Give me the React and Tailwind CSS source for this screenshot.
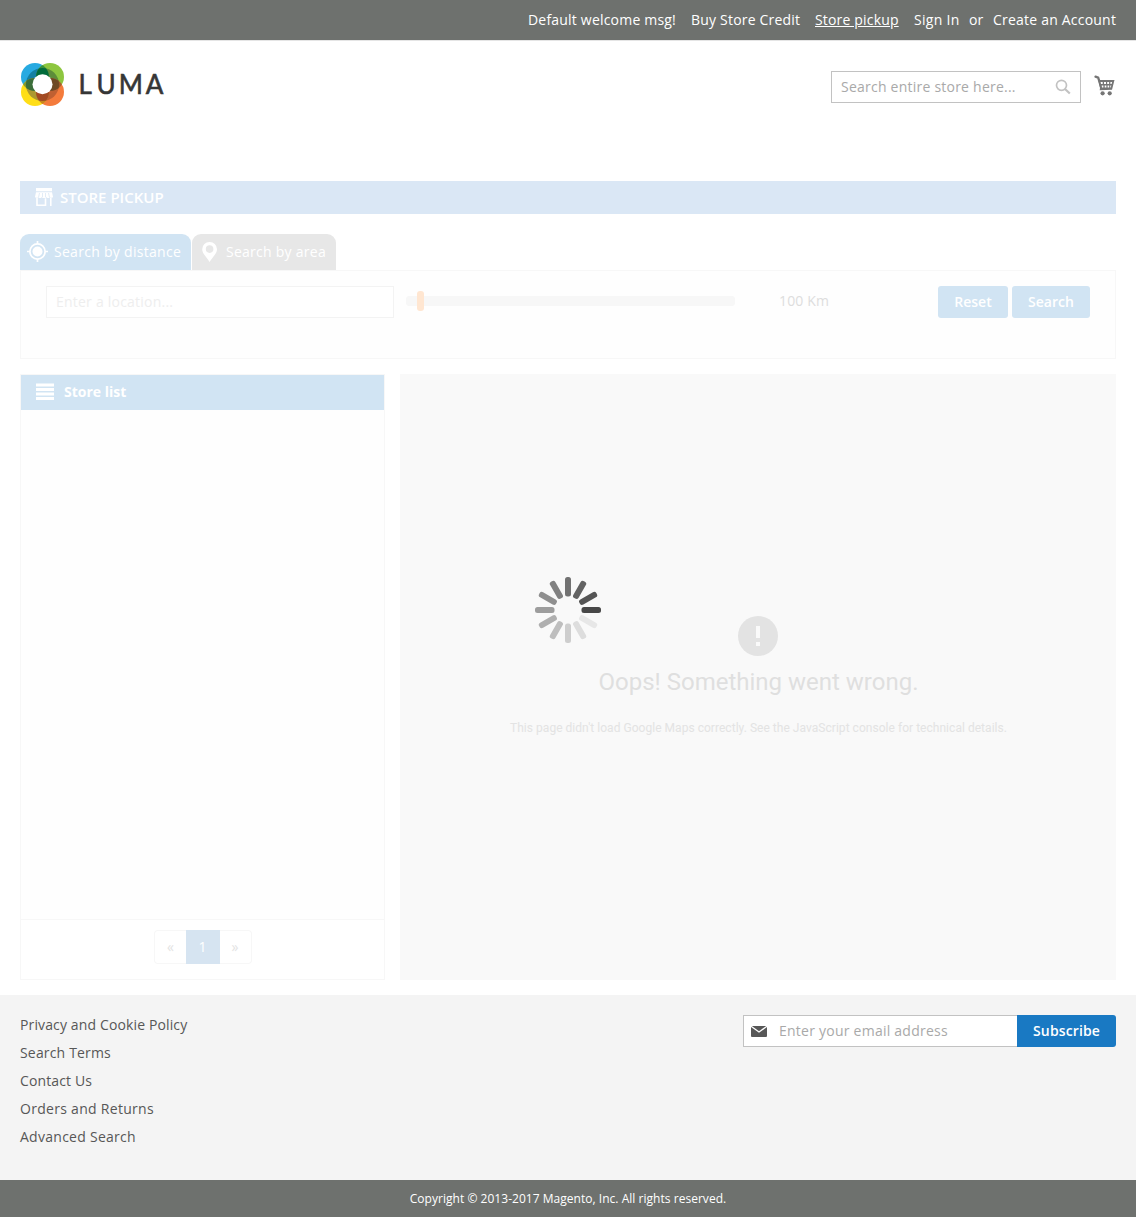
import React from 'react';

const overlaps = [
  { id: 'top', a: [35, 77], b: [50, 77], color: '#006b3a' },
  { id: 'left', a: [35, 77], b: [35, 92], color: '#3b6e3a' },
  { id: 'right', a: [50, 77], b: [50, 92], color: '#6f4a25' },
  { id: 'bottom', a: [35, 92], b: [50, 92], color: '#a34a22' },
];

function Logo() {
  return (
    <div className="flex h-[45px] w-[156px] items-start">
      <svg className="h-[45px] w-[45px] shrink-0" viewBox="20 62 45 45">
        <defs>
          {overlaps.map((o) => (
            <clipPath key={o.id} id={`lens-${o.id}`}>
              <circle cx={o.a[0]} cy={o.a[1]} r="14" />
            </clipPath>
          ))}
          <clipPath id="ring"><circle cx="42.5" cy="84.5" r="16.6" /></clipPath>
        </defs>
        <circle cx="35" cy="77" r="14" fill="#27aae1" />
        <circle cx="50" cy="77" r="14" fill="#8dc63f" />
        <circle cx="50" cy="92" r="14" fill="#f47b3c" />
        <circle cx="35" cy="92" r="14" fill="#ffde17" />
        {overlaps.map((o) => (
          <circle key={o.id} cx={o.b[0]} cy={o.b[1]} r="14" fill={o.color} opacity=".6" clipPath={`url(#lens-${o.id})`} />
        ))}
        <g clipPath="url(#ring)">
          <circle cx="35" cy="77" r="14" fill="#1480a3" />
          <circle cx="50" cy="77" r="14" fill="#5d8d3a" />
          <circle cx="50" cy="92" r="14" fill="#bf6032" />
          <circle cx="35" cy="92" r="14" fill="#ad9830" />
          {overlaps.map((o) => (
            <circle key={o.id} cx={o.b[0]} cy={o.b[1]} r="14" fill={o.color} clipPath={`url(#lens-${o.id})`} />
          ))}
        </g>
        <circle cx="42.5" cy="84.3" r="10" fill="#fff" />
      </svg>
      <svg className="mt-[2px] ml-[10px] h-[42px] w-[100px] shrink-0 overflow-visible" viewBox="-4 -6 100 42">
        <text x="-0.4 17.6 39.8 66.800" y="24.300" stroke="#363636" strokeWidth=".6" className="fill-[#363636] font-['Lato',sans-serif] text-[26px] font-normal">LUMA</text>
      </svg>
    </div>
  );
}

function CartIcon() {
  return (
    <svg className="h-[21px] w-[21px]" viewBox="0 0 21 21" fill="#757575">
      <path d="M1.500 1.700 4.200 2.700 7.500 13.500" fill="none" stroke="#757575" strokeWidth="2.300" strokeLinecap="round" />
      <path d="M4.300 5H20.500l-2.500 9.700-12.300.6.300-2.300z" />
      <g fill="#fff">
        <path d="M6.600 7h2.100v1.900H7zM10 7h2v1.900h-2zM13.200 7h1.900v1.900h-1.900zM16.400 7h1.700l-.5 1.900h-1.200zM7.700 10.500h1.700v1.900H8zM10.700 10.500h1.700v1.900h-1.700zM13.600 10.500h1.600v1.900h-1.600zM16.300 10.500h1l-.5 1.900h-.5z" />
      </g>
      <circle cx="8.600" cy="18.300" r="2.100" />
      <circle cx="15.700" cy="18.300" r="2.100" />
    </svg>
  );
}

function StoreIcon() {
  return (
    <svg className="h-[18px] w-[18px]" viewBox="0 0 18 18">
      <path d="M1 0h16v3.200H1zM1 4.200h16l1 4.500c0 1.500-2.800 1.500-3.200.2-.6 1.400-2.900 1.400-3.400 0-.6 1.400-4 1.400-4.600 0-.5 1.400-2.900 1.400-3.500 0C2.900 10.200 0 10.200 0 8.700z" fill="#fff" />
      <path d="M4.500 5 3.600 9M7.500 5v4M10.500 5v4M13.500 5l.9 4" stroke="#dae7f5" strokeWidth=".8" />
      <path d="M2 10v7.200h8.500V10.500M15.800 10v8" fill="none" stroke="#fff" strokeWidth="1.600" />
      <path d="M10 10.500h1v7h-1z" fill="#fff" />
    </svg>
  );
}

const spokes = ['#484848', '#e7e7e7', '#dddddd', '#cecece', '#bebebe', '#afafaf', '#9d9d9d', '#8f8f8f', '#818181', '#727272', '#636363', '#555555'];

function Spinner() {
  return (
    <svg className="absolute top-[576px] left-[534px] h-[68px] w-[68px]" viewBox="-34 -34 68 68">
      {spokes.map((c, i) => (
        <rect key={c} x="13.500" y="-3" width="19.500" height="6" rx="2.500" fill={c} transform={`rotate(${i * 30})`} />
      ))}
    </svg>
  );
}

export default function App() {
  return (
    <div className="relative flex h-[1217px] w-[1136px] flex-col overflow-hidden bg-white font-['Open_Sans',sans-serif] text-sm leading-5 text-[#575757]">
      <div className="flex h-[40px] shrink-0 items-center justify-end bg-[#6e716e] px-5 text-white">
        <span className="w-[148px] tracking-[.2px] whitespace-nowrap">Default welcome msg!</span>
        <a className="ml-[15px] w-[109px] tracking-[.2px] whitespace-nowrap">Buy Store Credit</a>
        <a className="ml-[15px] w-[84px] tracking-[.17px] whitespace-nowrap underline">Store pickup</a>
        <a className="ml-[15px] w-[46px] tracking-[.3px] whitespace-nowrap">Sign In</a>
        <span className="ml-[9px] w-[14px]">or</span>
        <a className="ml-[10px] w-[123px] tracking-[.21px] whitespace-nowrap">Create an Account</a>
      </div>

      <header className="flex h-[141px] shrink-0 items-start justify-between border-t border-[#e5e5e5] px-5">
        <div className="mt-[21px]"><Logo /></div>
        <div className="mt-[30px] flex">
          <div className="flex h-[32px] w-[250px] items-center justify-between border border-[#c2c2c2] pr-[9px] pl-[9px] text-[#a9a9a9]">
            <span className="tracking-[.23px]">Search entire store here...</span>
            <svg className="h-4 w-4" viewBox="0 0 16 16" fill="none" stroke="#c2c2c2" strokeWidth="1.700">
              <circle cx="6.500" cy="6.300" r="5" />
              <path d="m10 10 4.800 4.500" strokeWidth="2.200" />
            </svg>
          </div>
          <div className="mt-[4px] ml-[13px] h-[21px] w-[22px]"><CartIcon /></div>
        </div>
      </header>

      <main className="flex h-[814px] shrink-0 flex-col px-5">
        <h1 className="flex h-[33px] shrink-0 items-center bg-[#dae7f5] pb-px pl-[15px] text-[15px] font-semibold text-white">
          <StoreIcon />
          <span className="ml-[7px]">STORE PICKUP</span>
        </h1>

        <div className="mt-5 flex h-[36px] shrink-0 gap-px text-white">
          <div className="flex w-[171px] items-center rounded-t-[9px] bg-[#d1e4f3] pl-[7px]">
            <svg className="h-[22px] w-[22px]" viewBox="0.500 0.500 22 22" fill="none" stroke="#fff">
              <circle cx="11" cy="11" r="7.600" strokeWidth="1.700" />
              <circle cx="11" cy="11" r="5" fill="#fff" stroke="none" />
              <path d="M11 .5v3M11 18.500v3M.5 11h3M18.500 11h3" strokeWidth="1.700" />
            </svg>
            <span className="ml-[5px] tracking-[.29px]">Search by distance</span>
          </div>
          <div className="flex w-[144px] items-center rounded-t-[9px] bg-[#e7e7e7] pl-[10px]">
            <svg className="h-[20px] w-[16px]" viewBox="0 0 16 20">
              <path fillRule="evenodd" d="M7.600 0a7.300 7.300 0 0 0-7.400 7.200C.2 11.500 4.500 15 7.600 20c3.100-5 7.400-8.500 7.400-12.800A7.300 7.300 0 0 0 7.600 0Zm0 3.300a3.800 3.800 0 1 1 0 7.600 3.800 3.800 0 0 1 0-7.600Z" fill="#fff" />
            </svg>
            <span className="ml-[8px] tracking-[.26px]">Search by area</span>
          </div>
        </div>

        <section className="flex h-[89px] shrink-0 items-start border border-[#f7f7f7] bg-[#fefefe] pt-[15px] pr-[25px] pl-[25px]">
          <div className="flex h-[32px] w-[348px] items-center border border-[#f3f3f3] bg-white pl-[9px] tracking-[.22px] text-[#eeeeee]">Enter a location...</div>
          <div className="mt-[10px] ml-3 flex h-[10px] w-[329px] items-center rounded-[3px] bg-[#f7f7f7] pl-[11px]">
            <span className="h-5 w-[7px] shrink-0 rounded-[3px] bg-[#ffe6d1]" />
          </div>
          <span className="mt-[5px] ml-[44px] tracking-[.15px] text-[#dddddd]">100 Km</span>
          <div className="ml-auto flex gap-1 font-semibold text-white">
            <button className="h-8 w-[70px] rounded-[3px] bg-[#d1e4f3]">Reset</button>
            <button className="h-8 w-[78px] rounded-[3px] bg-[#d1e4f3]">Search</button>
          </div>
        </section>

        <div className="mt-[15px] flex h-[606px] shrink-0 gap-[15px]">
          <section className="flex w-[365px] flex-col border border-[#f7f7f7] bg-[#fefefe]">
            <h2 className="flex h-[35px] shrink-0 items-center bg-[#d1e4f3] pb-[2px] pl-[15px] font-bold text-white">
              <svg className="h-[17px] w-[18px]" viewBox="0 0 18 17" fill="#fff">
                <path d="M0 .5h18v3H0zM0 5h18v3H0zM0 9.500h18v3H0zM0 14h18v3H0z" />
              </svg>
              <span className="ml-[10px]">Store list</span>
            </h2>
            <div className="grow" />
            <div className="flex h-[60px] shrink-0 justify-center border-t border-[#f7f7f7] bg-white pt-[10px] text-[#e3e3e3]">
              <div className="flex h-[34px] w-[98px]">
                <span className="flex w-8 items-center justify-center rounded-l border border-r-0 border-[#f7f7f7] pl-px">«</span>
                <span className="flex w-[34px] items-center justify-center bg-[#d6e4f1] text-white">1</span>
                <span className="flex w-8 items-center justify-center rounded-r border border-l-0 border-[#f7f7f7]">»</span>
              </div>
            </div>
          </section>
          <section className="flex w-[716px] flex-col items-center bg-[#f9f9f9] pt-[242px] font-['Roboto',sans-serif]">
            <svg className="h-10 w-10" viewBox="0 0 40 40">
              <circle cx="20" cy="20" r="20" fill="#e3e3e3" />
              <path d="M18 10h4v12h-4zM18 26h4v4h-4z" fill="#fafafa" />
            </svg>
            <p className="mt-[10px] pl-px text-2xl text-[#dfdfdf]">Oops! Something went wrong.</p>
            <p className="mt-[22px] pl-px text-xs leading-4 tracking-[.035px] text-[#e3e3e3]">This page didn't load Google Maps correctly. See the JavaScript console for technical details.</p>
          </section>
        </div>
      </main>

      <footer className="flex h-[185px] shrink-0 items-start justify-between bg-[#f4f4f4] px-5 pt-5">
        <ul className="flex flex-col gap-2">
          <li className="tracking-[.13px]">Privacy and Cookie Policy</li>
          <li className="tracking-[.17px]">Search Terms</li>
          <li className="tracking-[.12px]">Contact Us</li>
          <li className="tracking-[.29px]">Orders and Returns</li>
          <li className="tracking-[.27px]">Advanced Search</li>
        </ul>
        <div className="flex h-8">
          <div className="flex w-[274px] items-center border border-r-0 border-[#c2c2c2] bg-white pl-[7px] text-[#a9a9a9]">
            <svg className="h-[11px] w-[16px]" viewBox="0 0 16 11" fill="#575757">
              <path d="M.8 0h14.400L8 5.200z" />
              <path d="M0 1v9a1 1 0 0 0 1 1h14a1 1 0 0 0 1-1V1L8 6.800z" />
            </svg>
            <span className="ml-[12px] tracking-[.24px]">Enter your email address</span>
          </div>
          <button className="w-[99px] rounded-r-[3px] bg-[#1979c3] font-semibold tracking-[.12px] text-white">Subscribe</button>
        </div>
      </footer>
      <div className="flex h-[37px] shrink-0 items-center justify-center bg-[#6e716e] text-xs tracking-[.03px] text-white">Copyright © 2013-2017 Magento, Inc. All rights reserved.</div>
      <Spinner />
    </div>
  );
}
